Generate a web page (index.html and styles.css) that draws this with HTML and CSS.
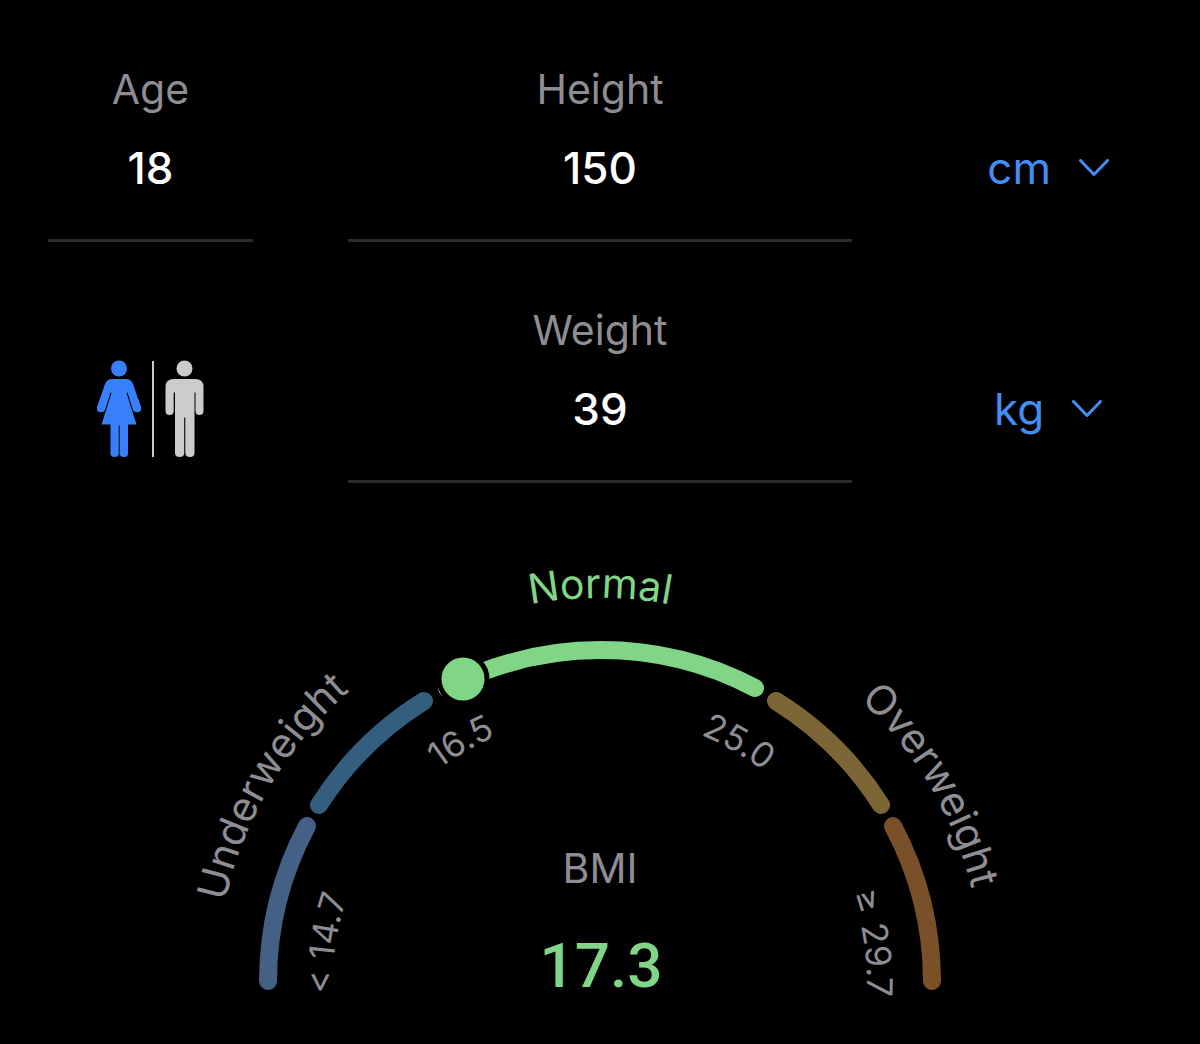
FILE: index.html
```html
<!DOCTYPE html>
<html lang="en">
<head>
    <meta charset="UTF-8">
    <meta name="viewport" content="width=device-width, initial-scale=1.0">
    <title>BMI Calculator</title>
    <link rel="stylesheet" href="styles.css">
</head>
<body>
    <main class="calculator">
        <!-- Inputs -->
        <form class="inputs">
            <div class="field">
                <label for="age">Age</label>
                <input type="text" inputmode="numeric" id="age" name="age" value="18">
            </div>
            <div class="field">
                <label for="height">Height</label>
                <input type="text" inputmode="decimal" id="height" name="height" value="150">
            </div>
            <div class="unit">
                <select id="height-unit" name="height-unit" aria-label="Height unit">
                    <option value="cm">cm</option>
                    <option value="ft">ft</option>
                </select>
                <svg class="chevron" viewBox="0 0 30 18" aria-hidden="true">
                    <path d="M1.5 1.5 15 15.5 28.5 1.5" />
                </svg>
            </div>

            <div class="gender" role="radiogroup" aria-label="Gender">
                <label class="gender-option">
                    <input type="radio" name="gender" value="female" aria-label="Female" checked>
                    <svg width="44" height="97" viewBox="0 0 44 97" aria-hidden="true">
                        <circle cx="22" cy="8.500" r="8" />
                        <path d="M15 19H29Q34 19 36 24L44 47Q45 51 42 52Q37.500 53 36 50L30.500 32.500 29.500 33 39.500 64.500H31V93.500Q31 97 27 97Q22.700 97 22.700 93.500V65.500H21.700V93.500Q21.700 97 17.500 97Q13.500 97 13.500 93.500V64.500H4.500L14.500 33 13.500 32.500 8 50Q6.500 53 2 52Q-1 51 0 47L8 24Q10 19 15 19Z" />
                    </svg>
                </label>
                <span class="gender-divider"></span>
                <label class="gender-option">
                    <input type="radio" name="gender" value="male" aria-label="Male">
                    <svg width="39" height="97" viewBox="0 0 39 97" aria-hidden="true">
                        <circle cx="19.500" cy="8.500" r="8" />
                        <path d="M9 19H30Q38.500 19 38.500 27V51Q38.500 55 34.500 55Q30.500 55 30.500 51V32.500H29.500V93Q29.500 97 25 97Q20.300 97 20.300 93V57.500H19.200V93Q19.200 97 14.500 97Q10 97 10 93V32.500H8.700V51Q8.700 55 4.500 55Q0.500 55 0.500 51V27Q0.500 19 9 19Z" />
                    </svg>
                </label>
            </div>
            <div class="field">
                <label for="weight">Weight</label>
                <input type="text" inputmode="decimal" id="weight" name="weight" value="39">
            </div>
            <div class="unit">
                <select id="weight-unit" name="weight-unit" aria-label="Weight unit">
                    <option value="kg">kg</option>
                    <option value="lb">lb</option>
                </select>
                <svg class="chevron" viewBox="0 0 30 18" aria-hidden="true">
                    <path d="M1.5 1.5 15 15.5 28.5 1.5" />
                </svg>
            </div>
        </form>

        <!-- Gauge: arcs are centered on 600,438 -->
        <svg class="gauge" viewBox="0 0 1200 500" role="img" aria-label="BMI 17.3, normal">
            <defs>
                <path id="outer-curve" d="M217 437A383 383 0 0 1 983 437" />
                <path id="inner-curve" d="M342 507A267 267 0 1 1 858 507" />
            </defs>

            <path class="arc arc-severe-under" d="M268 437A332 332 0 0 1 307 282" />
            <path class="arc arc-under" d="M319 261A332 332 0 0 1 424 157" />
            <path class="arc arc-normal" d="M447 144A332 332 0 0 1 755 144" />
            <path class="arc arc-over" d="M776 157A332 332 0 0 1 881 261" />
            <path class="arc arc-obese" d="M893 282A332 332 0 0 1 932 437" />
            <circle class="marker" cx="463" cy="135" r="24" />

            <text class="category"><textPath href="#outer-curve" startOffset="17%">Underweight</textPath></text>
            <text class="category category-active"><textPath href="#outer-curve" startOffset="50%">Normal</textPath></text>
            <text class="category"><textPath href="#outer-curve" startOffset="83%">Overweight</textPath></text>

            <text class="limit"><textPath href="#inner-curve" startOffset="11%">&lt; 14.7</textPath></text>
            <text class="limit"><textPath href="#inner-curve" startOffset="35.7%">16.5</textPath></text>
            <text class="limit"><textPath href="#inner-curve" startOffset="64.3%">25.0</textPath></text>
            <text class="limit"><textPath href="#inner-curve" startOffset="89%">≥ 29.7</textPath></text>

            <text class="bmi-label" x="600" y="339">BMI</text>
            <text class="bmi-value" x="601" y="443">17.3</text>
        </svg>
    </main>
</body>
</html>
```

FILE: styles.css
```css
/* General Styles */
* {
    box-sizing: border-box;
}

body {
    margin: 0;
    background: #000000;
    color: #8E8D93;
    font-family: 'Inter', sans-serif;
}

.calculator {
    max-width: 1200px;
    margin: 0 auto;
    padding-top: 64px;
}

/* Inputs */
.inputs {
    display: grid;
    grid-template-columns: 205fr 505fr 205fr;
    column-gap: 95px;
    row-gap: 63px;
    padding: 0 48px;
}

.field {
    display: flex;
    flex-direction: column;
    gap: 26px;
    text-align: center;
}

.field label {
    font-size: 41px;
    line-height: 50px;
}

.field input {
    width: 100%;
    height: 102px;
    padding: 0 0 43px;
    border: none;
    border-bottom: 3px solid #2B2B2D;
    border-radius: 0;
    outline: none;
    background: transparent;
    color: #FFFFFF;
    font-family: inherit;
    font-size: 44px;
    font-weight: 500;
    text-align: center;
}

.unit {
    display: flex;
    align-items: center;
    justify-content: center;
    align-self: end;
    gap: 28px;
    height: 56px;
    margin-bottom: 46px;
    padding-right: 3px;
    color: #438EF2;
}

.unit select {
    appearance: none;
    field-sizing: content;
    padding: 0;
    border: none;
    outline: none;
    background: transparent;
    color: inherit;
    font-family: inherit;
    font-size: 44px;
    cursor: pointer;
}

.chevron {
    width: 30px;
    height: 18px;
    fill: none;
    stroke: currentColor;
    stroke-width: 3;
    stroke-linecap: round;
    stroke-linejoin: round;
    pointer-events: none;
}

/* Gender */
.gender {
    display: flex;
    align-items: center;
    justify-content: center;
    align-self: end;
    gap: 11px;
    margin-bottom: 26px;
}

.gender-option {
    display: block;
    cursor: pointer;
}

.gender-option input {
    position: absolute;
    opacity: 0;
    margin: 0;
}

.gender-option svg {
    display: block;
    fill: #CBCBCB;
}

.gender-option input:checked + svg {
    fill: #3880FB;
}

.gender-divider {
    width: 2px;
    height: 96px;
    background: #CBCBCB;
}

/* Gauge */
.gauge {
    display: block;
    width: 100%;
    margin-top: 61px;
}

.gauge text {
    fill: #8E8D93;
    text-anchor: middle;
}

.arc {
    fill: none;
    stroke-width: 18;
    stroke-linecap: round;
}

.arc-severe-under {
    stroke: #446084;
}

.arc-under {
    stroke: #335E7E;
}

.arc-normal {
    stroke: #80D586;
}

.arc-over {
    stroke: #7C6636;
}

.arc-obese {
    stroke: #7A5028;
}

.marker {
    fill: #80D586;
    stroke: #000000;
    stroke-width: 5;
}

.category {
    font-size: 41px;
}

.gauge .category-active,
.gauge .bmi-value {
    fill: #80D586;
}

.limit {
    font-size: 35px;
}

.bmi-label {
    font-size: 41px;
}

.bmi-value {
    font-family: 'Roboto', 'Inter', sans-serif;
    font-size: 62px;
    font-weight: 500;
}
```
